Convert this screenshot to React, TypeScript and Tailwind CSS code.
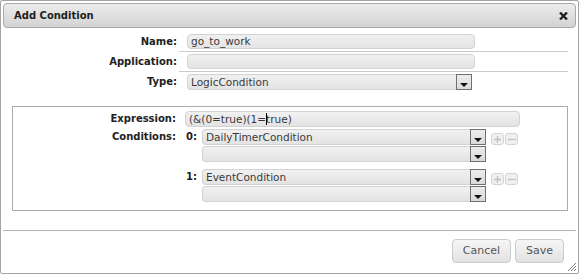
import type { ReactNode } from 'react';

const field =
  'rounded-[4px] border border-[#d2d2d2] bg-linear-to-b from-[#f1f1f1] to-[#e3e3e3] text-[#3a3a3a] text-[10.5px] leading-none flex items-center pl-[3px]';

function DropButton() {
  return (
    <span className="w-[16px] h-full shrink-0 border border-[#707070] bg-linear-to-b from-[#ececec] to-[#dadada] flex items-end justify-center pb-[2px]">
      <svg width="8" height="4" viewBox="0 0 8 4">
        <path d="M0 0h8L4 4z" fill="#111" />
      </svg>
    </span>
  );
}

function Select({ value, w, h = 'h-[16px]' }: { value?: string; w: string; h?: string }) {
  return (
    <div className={`flex ${w} ${h}`}>
      <div className={`${field} flex-1 rounded-r-none border-r-0 h-full`}>{value}</div>
      <DropButton />
    </div>
  );
}

function SmallButton({ children }: { children: ReactNode }) {
  return (
    <span className="w-[13px] h-[12px] rounded-[3px] border border-[#d4d4d4] bg-[#f0f0f0] text-[#c2c2c2] flex items-center justify-center">
      {children}
    </span>
  );
}

function Condition({ index, value }: { index: string; value: string }) {
  return (
    <div className="flex">
      <span className="w-[16px] font-bold text-[#222] text-[10px] leading-[16px]">{index}</span>
      <div className="flex flex-col gap-[1px]">
        <div className="flex items-end">
          <Select value={value} w="w-[284px]" />
          <div className="flex gap-[1px] ml-[5px]">
            <SmallButton>
              <svg width="7" height="7" viewBox="0 0 7 7">
                <path d="M3.5 0v7M0 3.5h7" stroke="#c0c0c0" strokeWidth="1.3" />
              </svg>
            </SmallButton>
            <SmallButton>
              <svg width="8" height="7" viewBox="0 0 8 7">
                <path d="M0 3.5h8" stroke="#c0c0c0" strokeWidth="1.3" />
              </svg>
            </SmallButton>
          </div>
        </div>
        <Select w="w-[284px]" />
      </div>
    </div>
  );
}

export default function App() {
  return (
    <div className="w-[579px] h-[274px] bg-white font-['DejaVu_Sans',Verdana,sans-serif]">
      <div className="relative w-full h-full border border-[#a4a4a4] rounded-[2px] p-[2px] flex flex-col">
        {/* Title bar */}
        <div className="h-[25px] shrink-0 rounded-[4px] border border-[#a9a9a9] bg-linear-to-b from-[#ececec] to-[#d3d3d3] flex items-center justify-between pl-[10px] pr-[7px]">
          <span className="text-[10px] font-bold text-[#1e1e1e]">Add Condition</span>
          <svg width="9" height="8" viewBox="0 0 9 8">
            <path d="M1 0.5l7 7M8 0.5l-7 7" stroke="#222" strokeWidth="2.4" />
          </svg>
        </div>

        {/* Main fields */}
        <div className="grid grid-cols-[174px_1fr] gap-x-[2px] pt-[4px] pr-[8px] text-[10px]">
          <div className="font-bold text-[#222] text-right leading-[20px]">Name:</div>
          <div className="pl-[8px] py-[2px] border-b border-[#cacaca]">
            <div className={`${field} w-[288px] h-[15px]`}>go_to_work</div>
          </div>
          <div className="font-bold text-[#222] text-right leading-[20px]">Application:</div>
          <div className="pl-[8px] py-[2px] border-b border-[#cacaca]">
            <div className={`${field} w-[288px] h-[15px]`}></div>
          </div>
          <div className="font-bold text-[#222] text-right leading-[20px]">Type:</div>
          <div className="pl-[8px] py-[2px]">
            <Select value="LogicCondition" w="w-[285px]" />
          </div>
        </div>

        {/* Logic fieldset */}
        <div className="mt-[14px] ml-[9px] mr-[8px] h-[105px] border border-[#ababab] pt-[4px] text-[10px]">
          <div className="flex">
            <div className="w-[163px] font-bold text-[#222] text-right leading-[16px]">Expression:</div>
            <div className={`${field} ml-[9px] w-[335px] h-[16px]`}>
              (&amp;(0=true)(1=
              <span className="relative">
                <span className="absolute left-0 top-[-1px] h-[12px] w-px bg-black" />t
              </span>
              rue)
            </div>
          </div>
          <div className="flex mt-[2px]">
            <div className="w-[163px] font-bold text-[#222] text-right leading-[16px]">Conditions:</div>
            <div className="ml-[10px] flex flex-col gap-[7px]">
              <Condition index="0:" value="DailyTimerCondition" />
              <Condition index="1:" value="EventCondition" />
            </div>
          </div>
        </div>

        {/* Footer */}
        <div className="mt-[19px] border-t border-[#b4b4b4] flex-1 flex justify-end gap-[4px] pt-[8px] pr-[12px]">
          <button className="w-[59px] h-[24px] rounded-[4px] border border-[#cbcbcb] bg-linear-to-b from-[#f6f6f6] to-[#e2e2e2] text-[11px] text-[#555]">
            Cancel
          </button>
          <button className="w-[49px] h-[24px] rounded-[4px] border border-[#cbcbcb] bg-linear-to-b from-[#f6f6f6] to-[#e2e2e2] text-[11px] text-[#555]">
            Save
          </button>
        </div>

        {/* Resize grip */}
        <svg className="absolute right-[1px] bottom-[1px]" width="10" height="10" viewBox="0 0 10 10">
          <path d="M9 1L1 9M9 4L4 9M9 7L7 9" stroke="#808080" strokeWidth="1" />
        </svg>
      </div>
    </div>
  );
}
